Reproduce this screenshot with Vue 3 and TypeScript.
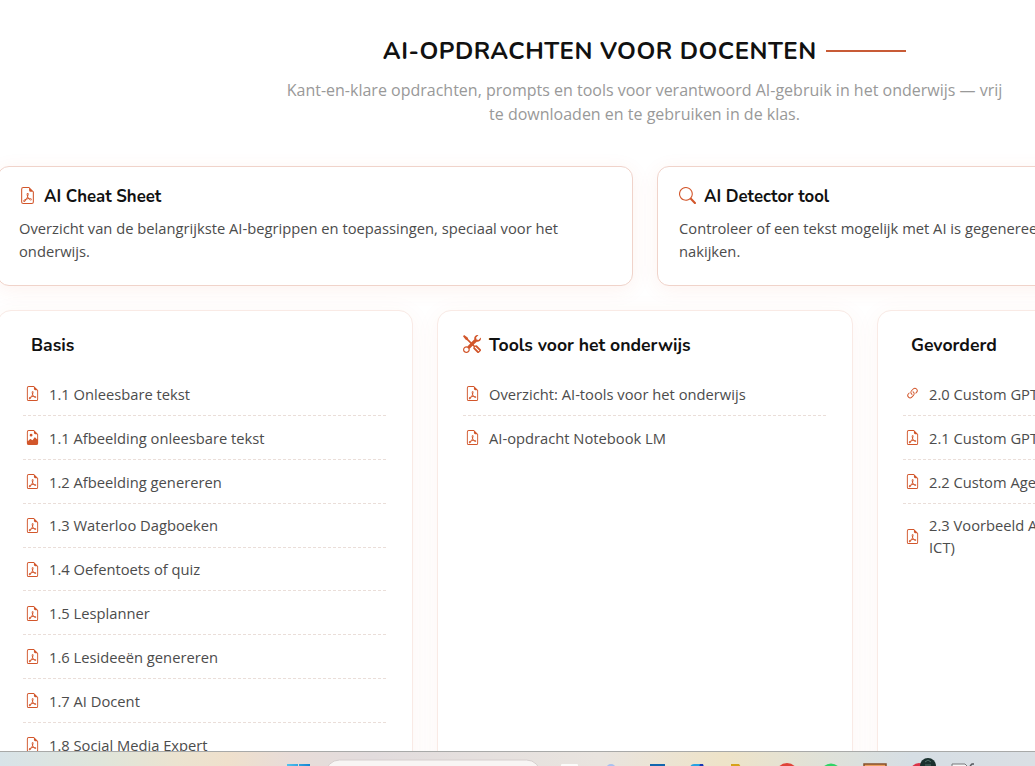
<script setup lang="ts">
import { defineComponent, h } from 'vue'

type IconName = 'pdf' | 'image' | 'link' | 'search' | 'tools'

interface Item { icon: IconName; lines: string[] }
interface Column { title: string; icon?: IconName; items: Item[] }

const paths: Record<IconName, string[]> = {
  pdf: [
    'M14 14V4.5L9.5 0H4a2 2 0 0 0-2 2v12a2 2 0 0 0 2 2h8a2 2 0 0 0 2-2M9.5 3A1.5 1.5 0 0 0 11 4.5h2V14a1 1 0 0 1-1 1H4a1 1 0 0 1-1-1V2a1 1 0 0 1 1-1h5.5z',
    'M4.603 14.087a.8.8 0 0 1-.438-.42c-.195-.388-.13-.776.08-1.102.198-.307.526-.568.897-.787a7.7 7.7 0 0 1 1.482-.645 20 20 0 0 0 1.062-2.227 7.3 7.3 0 0 1-.43-1.295c-.086-.4-.119-.796-.046-1.136.075-.354.274-.672.65-.823.192-.077.4-.12.602-.077a.7.7 0 0 1 .477.365c.088.164.12.356.127.538.007.188-.012.396-.047.614-.084.51-.27 1.134-.52 1.794a11 11 0 0 0 .98 1.686 5.8 5.8 0 0 1 1.334.05c.364.066.734.195.96.465.12.144.193.32.2.518.007.192-.047.382-.138.563a1.04 1.04 0 0 1-.354.416.86.86 0 0 1-.51.138c-.331-.014-.654-.196-.933-.417a5.7 5.7 0 0 1-.911-.95 11.7 11.7 0 0 0-1.997.406 11.3 11.3 0 0 1-1.02 1.51c-.292.35-.609.656-.927.787a.8.8 0 0 1-.58.029m1.379-1.901q-.25.115-.459.238c-.328.194-.541.383-.647.547-.094.145-.096.25-.04.361q.016.032.026.044l.035-.012c.137-.056.355-.235.635-.572a8 8 0 0 0 .45-.606m1.64-1.33a13 13 0 0 1 1.01-.193 12 12 0 0 1-.51-.858 21 21 0 0 1-.5 1.05zm2.446.45q.226.245.435.41c.24.19.407.253.498.256a.1.1 0 0 0 .07-.015.3.3 0 0 0 .094-.125.44.44 0 0 0 .059-.2.1.1 0 0 0-.026-.063c-.052-.062-.2-.152-.518-.209a4 4 0 0 0-.612-.053zM8.078 7.8a7 7 0 0 0 .2-.828q.031-.188.043-.343a.6.6 0 0 0-.038-.297.2.2 0 0 0-.032-.04l-.022-.002a.2.2 0 0 0-.094.018c-.09.036-.146.11-.18.28-.033.157-.027.38.035.673q.03.15.088.54z',
  ],
  image: [
    'M6.502 7a1.5 1.5 0 1 0 0-3 1.5 1.5 0 0 0 0 3',
    'M14 14a2 2 0 0 1-2 2H4a2 2 0 0 1-2-2V2a2 2 0 0 1 2-2h5.5L14 4.5zM4 1a1 1 0 0 0-1 1v10l2.224-2.224a.5.5 0 0 1 .61-.075L8 11l2.157-3.02a.5.5 0 0 1 .76-.063L13 10V4.5h-2A1.5 1.5 0 0 1 9.5 3V1z',
  ],
  link: [
    'M4.715 6.542 3.343 7.914a3 3 0 1 0 4.243 4.243l1.828-1.829A3 3 0 0 0 8.586 5.5L8 6.086a1 1 0 0 0-.154.199 2 2 0 0 1 .861 3.337L6.88 11.45a2 2 0 1 1-2.83-2.83l.793-.792a4 4 0 0 1-.128-1.287z',
    'M6.586 4.672A3 3 0 0 0 7.414 9.5l.775-.776a2 2 0 0 1-.896-3.346L9.12 3.55a2 2 0 1 1 2.83 2.83l-.793.792c.112.42.155.855.128 1.287l1.372-1.372a3 3 0 1 0-4.243-4.243z',
  ],
  search: [
    'M11.742 10.344a6.5 6.5 0 1 0-1.397 1.398h-.001q.044.06.098.115l3.85 3.85a1 1 0 0 0 1.415-1.414l-3.85-3.85a1 1 0 0 0-.115-.1zM12 6.5a5.5 5.5 0 1 1-11 0 5.5 5.5 0 0 1 11 0',
  ],
  tools: [
    'M1 0 0 1l2.2 3.081a1 1 0 0 0 .815.419h.07a1 1 0 0 1 .708.293l2.675 2.675-2.617 2.654A3.003 3.003 0 0 0 0 13a3 3 0 1 0 5.878-.851l2.654-2.617.968.968-.305.914a1 1 0 0 0 .242 1.023l3.27 3.27a.997.997 0 0 0 1.414 0l1.586-1.586a.997.997 0 0 0 0-1.414l-3.27-3.27a1 1 0 0 0-1.023-.242L10.5 9.5l-.96-.96 2.68-2.643A3.005 3.005 0 0 0 16 3q0-.405-.102-.777l-2.14 2.141L12 4l-.364-1.757L13.777.102a3 3 0 0 0-3.675 3.68L7.462 6.46 4.793 3.793a1 1 0 0 1-.293-.707v-.071a1 1 0 0 0-.419-.814zm9.646 10.646a.5.5 0 0 1 .708 0l2.914 2.915a.5.5 0 0 1-.707.707l-2.915-2.914a.5.5 0 0 1 0-.708M3 11l.471.242.529.026.287.445.445.287.026.529L5 13l-.242.471-.026.529-.445.287-.287.445-.529.026L3 15l-.471-.242L2 14.732l-.287-.445L1.268 14l-.026-.529L1 13l.242-.471.026-.529.445-.287.287-.445.529-.026z',
  ],
}

const Icon = defineComponent({
  props: { name: { type: String, required: true } },
  setup(props) {
    return () =>
      h('svg', { viewBox: '0 0 16 16', fill: 'currentColor', 'aria-hidden': 'true' },
        paths[props.name as IconName].map((d) => h('path', { d })))
  },
})

const pdf = (...lines: string[]): Item => ({ icon: 'pdf', lines })

const features: { icon: IconName; title: string; lines: string[] }[] = [
  { icon: 'pdf', title: 'AI Cheat Sheet', lines: ['Overzicht van de belangrijkste AI-begrippen en toepassingen, speciaal voor het', 'onderwijs.'] },
  { icon: 'search', title: 'AI Detector tool', lines: ['Controleer of een tekst mogelijk met AI is gegenereerd', 'nakijken.'] },
]

const columns: Column[] = [
  {
    title: 'Basis',
    items: [
      pdf('1.1 Onleesbare tekst'),
      { icon: 'image', lines: ['1.1 Afbeelding onleesbare tekst'] },
      pdf('1.2 Afbeelding genereren'),
      pdf('1.3 Waterloo Dagboeken'),
      pdf('1.4 Oefentoets of quiz'),
      pdf('1.5 Lesplanner'),
      pdf('1.6 Lesideeën genereren'),
      pdf('1.7 AI Docent'),
      pdf('1.8 Social Media Expert'),
    ],
  },
  {
    title: 'Tools voor het onderwijs',
    icon: 'tools',
    items: [pdf('Overzicht: AI-tools voor het onderwijs'), pdf('AI-opdracht Notebook LM')],
  },
  {
    title: 'Gevorderd',
    items: [
      { icon: 'link', lines: ['2.0 Custom GPT'] },
      pdf('2.1 Custom GPT'),
      pdf('2.2 Custom Agent'),
      pdf('2.3 Voorbeeld AI', 'ICT)'),
    ],
  },
]
</script>

<template>
  <div class="screen">
    <main class="page">
      <div class="container">
        <header class="heading">
          <h1><span class="heading-text">AI-opdrachten voor docenten</span><span class="rule"></span></h1>
          <p>Kant-en-klare opdrachten, prompts en tools voor verantwoord AI-gebruik in het onderwijs — vrij<br />te downloaden en te gebruiken in de klas.</p>
        </header>
        <section class="features">
          <article v-for="f in features" :key="f.title" class="feature">
            <h2><Icon :name="f.icon" class="icon" /><span>{{ f.title }}</span></h2>
            <p><span v-for="l in f.lines" :key="l" class="line">{{ l }}</span></p>
          </article>
        </section>
        <section class="columns">
          <article v-for="c in columns" :key="c.title" class="column">
            <h2><Icon v-if="c.icon" :name="c.icon" class="icon" /><i v-else class="no-icon"></i><span>{{ c.title }}</span></h2>
            <ul>
              <li v-for="item in c.items" :key="item.lines[0]">
                <Icon :name="item.icon" class="icon" />
                <span><span v-for="l in item.lines" :key="l" class="line">{{ l }}</span></span>
              </li>
            </ul>
          </article>
        </section>
      </div>
    </main>
    <footer class="taskbar">
      <svg viewBox="0 0 1035 15" width="1035" height="15">
        <defs>
          <linearGradient id="win" x1="0" x2="1"><stop offset="0" stop-color="#52c3ee" /><stop offset="1" stop-color="#1585d2" /></linearGradient>
        </defs>
        <path d="M287 12h11v3h-11zM299 12h11v3h-11z" fill="url(#win)" />
        <rect x="325.500" y="8" width="215" height="30" rx="14" fill="#f8f5f4" stroke="#d6cfce" />
        <rect x="561" y="12" width="17" height="6" rx="1" fill="#fbfbfa" />
        <circle cx="611" cy="17" r="5" fill="#a9c1ef" />
        <path d="M650 12h15v3h-15z" fill="#1266ae" />
        <path d="M690 15q1-3 4-3h6v3z" fill="#28a2e2" /><path d="M700 12h3l1 3h-5z" fill="#1738b5" />
        <path d="M731 12h8l2 3h-10z" fill="#d6a21c" />
        <circle cx="787" cy="22" r="11" fill="#df4439" />
        <circle cx="831" cy="22" r="10.500" fill="#31d367" />
        <path d="M864 15v-3h22v3" fill="#eda05d" stroke="#85502c" stroke-width="1.500" />
        <circle cx="919" cy="20" r="9" fill="#da3448" />
        <circle cx="928" cy="14" r="8" fill="#19302d" />
        <path d="M925 10l3-2 3 2M925 13h6" fill="none" stroke="#52706b" />
        <path d="M952 15v-3h13l3 3" fill="#f5f6f6" stroke="#77797a" />
        <path d="M970 14l2-2h2" fill="none" stroke="#565b5f" stroke-width="1.500" />
      </svg>
    </footer>
  </div>
</template>

<style>
html,
body {
  margin: 0;
  overflow: hidden;
}
</style>

<style scoped>
.screen {
  display: flex;
  flex-direction: column;
  width: 1035px;
  height: 766px;
  overflow: hidden;
  background: #fff;
  color: #4c4c4c;
  font-family: "Open Sans", "Noto Sans", sans-serif;
}
.page {
  flex: 1;
  min-height: 0;
  overflow: hidden;
}
.container {
  width: 1296px;
  margin-left: -3px;
}
h1, h2, p, ul {
  margin: 0;
  padding: 0;
}
.heading {
  height: 166px;
  box-sizing: border-box;
  padding: 34px 1px 0 0;
  text-align: center;
}
h1 {
  display: flex;
  align-items: center;
  justify-content: center;
  gap: 9.500px;
  height: 34px;
  color: #111;
  font: 700 24px/34px Nunito, Lato, sans-serif;
  letter-spacing: 0.500px;
  text-transform: uppercase;
  white-space: nowrap;
}
.rule {
  width: 80px;
  height: 2px;
  background: #c85b36;
}
.heading p {
  margin-top: 10px;
  color: #999;
  font-size: 16px;
  line-height: 24px;
  white-space: nowrap;
}
.features {
  display: grid;
  grid-template-columns: 1fr 1fr;
  gap: 24px;
}
.feature {
  height: 120px;
  box-sizing: border-box;
  padding: 18px 21px 16px;
  border: 1px solid #f0d3ca;
  border-radius: 12px;
  background: #fff;
  box-shadow: 0 4px 20px rgba(225, 90, 45, 0.08);
}
h2 {
  display: flex;
  align-items: center;
  gap: 8px;
  color: #111;
  font: 700 17.600px/24px Nunito, Lato, sans-serif;
  white-space: nowrap;
}
.feature h2 {
  font-size: 16.800px;
}
.icon {
  flex: none;
  color: #d2562b;
}
.feature .icon {
  width: 17px;
  height: 17px;
  margin-top: -3px;
}
.feature p {
  margin-top: 8px;
  font-size: 14.720px;
  line-height: 23px;
}
.line {
  display: block;
  white-space: nowrap;
}
.columns {
  display: grid;
  grid-template-columns: repeat(3, 1fr);
  gap: 24px;
  margin-top: 24px;
}
.column {
  height: 560px;
  box-sizing: border-box;
  padding: 22px 25.600px 22px 25px;
  border: 1px solid #f9eae5;
  border-radius: 14px;
  background: #fff;
  box-shadow: 0 4px 24px rgba(225, 90, 45, 0.06);
}
.column h2 .icon {
  width: 18px;
  height: 18px;
  margin-top: -2px;
}
ul {
  margin-top: 15.200px;
  list-style: none;
}
li {
  display: flex;
  align-items: center;
  gap: 9px;
  padding: 10.600px 2px 10.200px;
  border-bottom: 1px dashed #eaded9;
  font-size: 14.720px;
  line-height: 22.080px;
}
li:last-child {
  border-bottom: 0;
}
li .icon {
  width: 15px;
  height: 15px;
}
.taskbar {
  flex: none;
  height: 14px;
  border-top: 1px solid #a8a9a8;
  overflow: hidden;
  background: linear-gradient(90deg, #d8e3e8 0, #e0e5da 10%, #ebe3d0 17%, #efe0cc 22%, #e8dcd8 28%, #e2dcdd 36%, #e9e4df 58%, #eee3c8 70%, #dfe1d9 80%, #d6dee4 88%, #dadfe4 100%);
}
.taskbar svg {
  display: block;
}
</style>
